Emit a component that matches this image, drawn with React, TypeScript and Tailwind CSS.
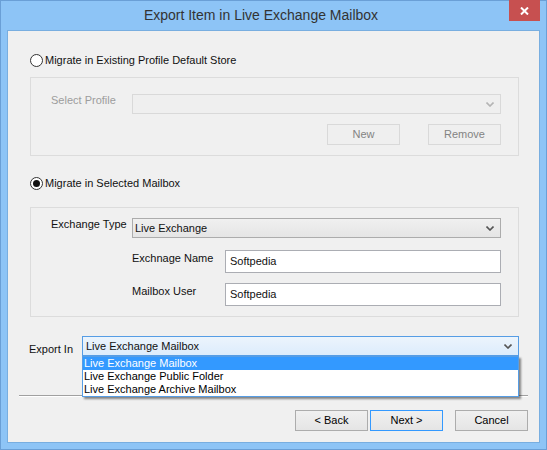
import React from "react";

const Chevron = ({ color }: { color: string }) => (
  <svg width="8" height="5" viewBox="0 0 8 5" className="shrink-0">
    <path d="M0.5 0.5 L4 4 L7.5 0.5" fill="none" stroke={color} strokeWidth="1.6" />
  </svg>
);

const Radio = ({ checked }: { checked?: boolean }) => (
  <div className="w-[13px] h-[13px] rounded-full border border-[#333] bg-white flex items-center justify-center shrink-0">
    {checked && <div className="w-[7px] h-[7px] rounded-full bg-[#111]" />}
  </div>
);

const Button = ({ label, primary, disabled }: { label: string; primary?: boolean; disabled?: boolean }) => (
  <div
    className={`w-[73px] h-[21px] flex items-center justify-center border ${
      disabled
        ? "border-[#d9d9d9] bg-[#efefef] text-[#838383]"
        : primary
        ? "border-[#3399ff] bg-gradient-to-b from-[#f0f0f0] to-[#e5e5e5] text-black"
        : "border-[#acacac] bg-gradient-to-b from-[#f0f0f0] to-[#e5e5e5] text-black"
    }`}
  >
    {label}
  </div>
);

const options = ["Live Exchange Mailbox", "Live Exchange Public Folder", "Live Exchange Archive Mailbox"];

export default function App() {
  return (
    <div className="w-[547px] h-[450px] bg-[#8dc4f6] border border-[#6a9fd6] flex flex-col font-['Liberation_Sans',Arial,sans-serif] text-[11px] leading-[13px] text-[#111] select-none">
      {/* title bar */}
      <div className="h-[29px] flex items-start shrink-0">
        <div className="flex-1 h-full flex items-center justify-center pl-[12px] text-[14px] text-[#333]">
          Export Item in Live Exchange Mailbox
        </div>
        <div className="w-[31px] h-[21px] -mt-px mr-[6px] bg-[#c75050] flex items-center justify-center">
          <svg width="9" height="8" viewBox="0 0 9 8">
            <path d="M1 0.5 L8 7.5 M8 0.5 L1 7.5" stroke="white" strokeWidth="2" />
          </svg>
        </div>
      </div>

      {/* client area */}
      <div className="mx-[6px] h-[413px] border border-[#78aee0] bg-[#f0f0f0] flex flex-col">
        <div className="mt-[23px] ml-[22px] h-[13px] flex items-center gap-[2px]">
          <Radio />
          <span>Migrate in Existing Profile Default Store</span>
        </div>

        <div className="mt-[10px] ml-[22px] w-[489px] h-[79px] border border-[#dcdcdc] pt-[16px] pl-[20px] pr-[17px] flex flex-col">
          <div className="flex items-start">
            <span className="w-[81px] text-[#9d9d9d]">Select Profile</span>
            <div className="w-[369px] h-[20px] border border-[#d9d9d9] bg-[#efefef] flex items-center justify-end pr-[6px]">
              <Chevron color="#b4b4b4" />
            </div>
          </div>
          <div className="mt-[10px] flex justify-end gap-[28px]">
            <Button label="New" disabled />
            <Button label="Remove" disabled />
          </div>
        </div>

        <div className="mt-[21px] ml-[22px] h-[13px] flex items-center gap-[2px]">
          <Radio checked />
          <span>Migrate in Selected Mailbox</span>
        </div>

        <div className="mt-[17px] ml-[22px] w-[489px] h-[110px] border border-[#dcdcdc] pt-[10px] pl-[20px] pr-[17px] flex flex-col">
          <div className="flex items-start">
            <span className="w-[81px]">Exchange Type</span>
            <div className="w-[369px] h-[20px] border border-[#acacac] bg-gradient-to-b from-[#f0f0f0] to-[#e5e5e5] flex items-center justify-between pl-[2px] pr-[6px]">
              <span>Live Exchange</span>
              <Chevron color="#555" />
            </div>
          </div>
          <div className="mt-[12px] ml-[81px] flex items-start">
            <span className="w-[93px] mt-[2px]">Exchnage Name</span>
            <div className="w-[276px] h-[23px] border border-[#abadb3] bg-white flex items-center pl-[4px]">Softpedia</div>
          </div>
          <div className="mt-[10px] ml-[81px] flex items-start">
            <span className="w-[93px] mt-[2px]">Mailbox User</span>
            <div className="w-[276px] h-[23px] border border-[#abadb3] bg-white flex items-center pl-[4px]">Softpedia</div>
          </div>
        </div>

        <div className="mt-[19px] ml-[21px] flex items-start">
          <span className="w-[53px] mt-[7px]">Export In</span>
          <div className="relative w-[437px]">
            <div className="h-[20px] border border-[#569de5] bg-gradient-to-b from-[#ecf4fc] to-[#dcecfc] flex items-center justify-between pl-[3px] pr-[6px]">
              <span>Live Exchange Mailbox</span>
              <Chevron color="#555" />
            </div>
            <div className="absolute left-0 top-full w-full border border-[#569de5] bg-white shadow-[2px_2px_2px_rgba(0,0,0,0.45)] z-10">
              {options.map((o, i) => (
                <div
                  key={o}
                  className={`h-[13px] px-[1px] flex items-center ${i === 0 ? "bg-[#3399ff] text-white" : "text-black"}`}
                >
                  {o}
                </div>
              ))}
            </div>
          </div>
        </div>

        <div className="mt-[39px] mx-[11px] border-t border-[#a0a0a0] border-b border-b-white" />

        <div className="mt-[13px] pr-[11px] flex justify-end">
          <Button label="< Back" />
          <div className="ml-[2px]">
            <Button label="Next >" primary />
          </div>
          <div className="ml-[12px]">
            <Button label="Cancel" />
          </div>
        </div>
      </div>
    </div>
  );
}
